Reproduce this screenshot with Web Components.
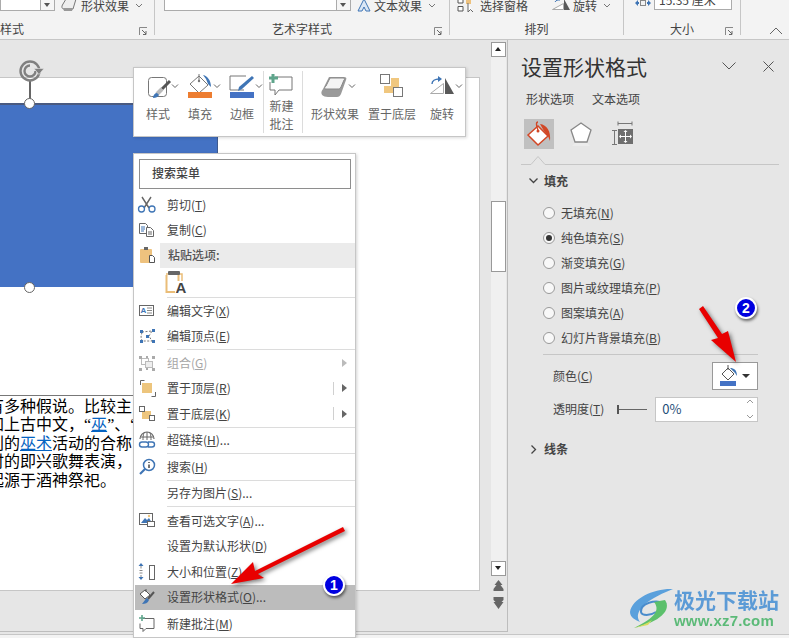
<!DOCTYPE html>
<html lang="zh-CN">

<head>
    <meta charset="UTF-8">
    <title>设置形状格式</title>
    <style>
        html, body { margin: 0; padding: 0; background: #e6e6e6; }
        body { width: 789px; height: 638px; overflow: hidden; font: 12px "Noto Sans CJK SC", "Noto Sans", sans-serif; color: #444; }
    </style>
</head>

<body>
    <ppt-window></ppt-window>
    <script>
        const chev = (x, y) => `<path d="M${x - 3} ${y - 1.5}l3 3 3-3" fill="none" stroke="#666"/>`;

        // viewBox values are screenshot coordinates, easier to compare with the reference
        const ICONS = {
            style: ['137 70 42 34', `<rect x="148.5" y="77.5" width="18" height="19" rx="3" fill="#fff" stroke="#777"/><path d="M170 81l-8 8" stroke="#555" stroke-width="3"/><path d="M162 89l-5 5" stroke="#bbb" stroke-width="4"/><path d="M153 98c0-3 2-5 4-5l2 2c-1 2-3 3-6 3z" fill="#3f75b5"/>${chev(175, 86)}`],
            fill: ['179 70 42 34', `<path d="M190 84l9-8 9 9-9 8z" fill="#fff" stroke="#777"/><path d="M199 74v7" stroke="#777"/><circle cx="199" cy="81" r="1.2" fill="#777"/><path d="M203 75c5 1 8 6 8 12l-3-3-2-5z" fill="#3f75b5"/><rect x="188" y="92" width="24" height="6" fill="#ed7d31"/>${chev(217, 86)}`],
            border: ['221 70 42 34', `<path d="M246 76h-16v14h14" fill="none" stroke="#777"/><path d="M252 76l2 2-12 11-4 2 1-4z" fill="#3f75b5"/><rect x="230" y="92" width="24" height="6" fill="#4472c4"/>${chev(259, 86)}`],
            note: ['264 70 38 28', `<path d="M275 77h17v13h-13l-4 5v-5h-5v-8" fill="#fff" stroke="#777"/><path d="M273 74v9M269 78h9" stroke="#5fa58c" stroke-width="3"/>`],
            effect: ['306 70 58 34', `<path d="M329 77h15c2 0 3 1 2 3l-5 14c-1 2-2 3-4 3h-9c-5 0-9-3-5-8z" fill="#9a9a9a"/><path d="M330 78h13c2 0 2 1 1 2l-3 7c-1 2-2 2-4 2h-12c-1-1 0-2 1-3z" fill="#f4f4f4" stroke="#888"/>${chev(352, 86)}`],
            back: ['364 70 56 34', `<rect x="391" y="78" width="8" height="9" fill="#f0c77f"/><rect x="384" y="86" width="9" height="7" fill="#f0c77f"/><rect x="380.5" y="74.5" width="9" height="9" fill="#fff" stroke="#777"/><rect x="393.5" y="87.5" width="9" height="9" fill="#fff" stroke="#777"/>`],
            rotate: ['420 70 44 34', `<path d="M430.5 93.5l13-10v10z" fill="#fff" stroke="#aaa"/><path d="M445 78l9 16h-9z" fill="#595959"/><path d="M432 84c0-3 3-5 7-5" fill="none" stroke="#3f75b5" stroke-width="1.4"/><path d="M438 76l4 3-4 3z" fill="#3f75b5"/>${chev(459, 86)}`],

            cut: ['137 195 20 20', `<path d="M142 197l7 11M151 197l-7 11" stroke="#666" stroke-width="1.4"/><circle cx="141.5" cy="209" r="3" fill="none" stroke="#3f75b5" stroke-width="1.3"/><circle cx="152" cy="209" r="3" fill="none" stroke="#3f75b5" stroke-width="1.3"/>`],
            copy: ['137 220 20 20', `<path d="M139.5 223.5h6l2 2v8h-8z" fill="#fff" stroke="#666"/><path d="M141 227h4M141 229h4M141 231h3" stroke="#3f75b5"/><path d="M146.5 227.5h4l3 3v6h-7z" fill="#fff" stroke="#666"/><path d="M148 232h4M148 234h4" stroke="#666"/>`],
            paste: ['137 245 20 20', `<rect x="140" y="248" width="12" height="14" rx="1" fill="#eec27e"/><rect x="144" y="246" width="4" height="3" fill="#666"/><path d="M149.5 254.5h3l2 2v5h-5z" fill="#fff" stroke="#555"/>`],
            pastetext: ['165 270 24 26', `<path d="M166.5 275v17h12V275" fill="none" stroke="#eabd78" stroke-width="2"/><path d="M166 274h16v9" fill="none" stroke="#eabd78" stroke-width="1.5"/><rect x="168" y="271" width="12" height="4" rx="1" fill="#666"/><rect x="175" y="281" width="12" height="13" fill="#fff"/><text x="175.5" y="293" font-size="15" font-weight="700" fill="#444" font-family="Liberation Sans">A</text>`],
            edittext: ['137 301 20 20', `<rect x="139.5" y="305.5" width="14" height="10" fill="#fff" stroke="#666"/><text x="140.5" y="313" font-size="8" font-weight="700" fill="#3f75b5" font-family="Liberation Sans">A</text><path d="M147 308h5M147 310.5h5M147 313h5" stroke="#888"/>`],
            points: ['137 326 20 20', `<path d="M142 332l10-1-3 5 3 5-10 0-1-4z" fill="none" stroke="#777" stroke-dasharray="2 1.5"/><path d="M140 330h3v3h-3zM152 329h3v3h-3zM146 335h3v3h-3zM140 340h3v3h-3zM152 340h3v3h-3z" fill="#3f75b5"/>`],
            group: ['137 353 20 20', `<rect x="141.5" y="358.5" width="7" height="6" fill="none" stroke="#bbb"/><rect x="145.5" y="361.5" width="7" height="6" fill="#eee" stroke="#bbb"/><path d="M139 356h3v3h-3zM152 356h3v3h-3zM139 368h3v3h-3zM152 368h3v3h-3zM146 356h2v2h-2zM146 368h2v2h-2z" fill="#aaa"/>`],
            front: ['137 378 20 20', `<path d="M140.5 385v-4.500h4M155.5 392v4.500h-4" fill="none" stroke="#666"/><rect x="142" y="383" width="10" height="10" fill="#edc57d"/>`],
            sendback: ['137 403 20 20', `<rect x="142" y="410" width="9" height="8" fill="#edc57d"/><rect x="139.5" y="405.5" width="5" height="5" fill="#fff" stroke="#666"/><rect x="149.5" y="414.5" width="5" height="5" fill="#fff" stroke="#666"/>`],
            link: ['137 430 20 20', `<path d="M140 439a7 7 0 0 1 14 0" fill="none" stroke="#666" stroke-width="1.2"/><path d="M147 432v8M140.5 437h13M144 433c-1 2-1 5-1 7M150 433c1 2 1 5 1 7" stroke="#666" fill="none"/><path d="M142 442h4a2 2 0 0 1 0 5h-4a2 2 0 0 1 0-5zM148 442h4a2 2 0 0 1 0 5h-4" fill="none" stroke="#3f75b5" stroke-width="1.4"/>`],
            search: ['137 457 20 20', `<circle cx="149" cy="465" r="5.5" fill="#fff" stroke="#3f75b5" stroke-width="1.5"/><path d="M145 469l-5 5" stroke="#3f75b5" stroke-width="2.2"/><path d="M149 462v1M149 464.500v3.500" stroke="#444" stroke-width="1.5"/>`],
            alt: ['137 511 20 20', `<rect x="139.5" y="513.5" width="13" height="11" fill="#fff" stroke="#666"/><path d="M141 523l4-5 2 2 2-2 3 5z" fill="#3f75b5"/><circle cx="149" cy="516" r="1.2" fill="#edc57d"/><rect x="147.5" y="521.5" width="7" height="5" fill="#fff" stroke="#666"/>`],
            size: ['137 561 20 20', `<path d="M141 564.500v3M141 574v3M139.500 569.500h3M139.500 572h3" stroke="#888"/><path d="M141 562l-2.500 3h5zM141 579l-2.500-3h5z" fill="#3f75b5"/><rect x="149.5" y="564.5" width="5" height="14" fill="#fff" stroke="#666"/>`],
            format: ['137 587 20 20', `<path d="M140 594l5-4 5 5-5 4z" fill="#fff" stroke="#555"/><path d="M146 589v3" stroke="#555"/><path d="M154 592l-6 7" stroke="#555" stroke-width="2"/><path d="M147 598c-2 1-3 4-5 6 3 0 6-1 7-4z" fill="#3f75b5"/>`],
            comment: ['137 613 20 20', `<path d="M143 617.500h11v10h-8l-3 3v-3h-3v-5" fill="#fff" stroke="#666"/><path d="M142 614v6M139 617h6" stroke="#5fa58c" stroke-width="1.6"/>`]
        };

        const svgIcon = (name) => {
            const [vb, body] = ICONS[name];
            const parts = vb.split(' ');
            return `<svg width="${parts[2]}" height="${parts[3]}" viewBox="${vb}" aria-hidden="true">${body}</svg>`;
        };

        const define = (name, css, html) => {
            customElements.define(name, class extends HTMLElement {
                connectedCallback() {
                    if (this.shadowRoot) return;
                    const root = this.attachShadow({ mode: 'open' });
                    const markup = typeof html === 'function' ? html(this) : html;
                    root.innerHTML = `<style>${css}</style>${markup}`;
                }
            });
        };

        define('ribbon-group', `
            :host { display: block; height: 35px; box-sizing: border-box; border-right: 1px solid #c6c6c6; flex: none; }
            .top { height: 22px; display: flex; align-items: flex-start; }
            .foot { height: 13px; display: grid; grid-template-columns: 1fr auto 1fr; align-items: center; line-height: 14px; }
            .foot span { grid-column: 2; }
            :host([start]) .foot span { grid-column: 1; justify-self: start; }
            svg { grid-column: 3; justify-self: end; margin: 4px 6px 0 0; }
        `, el => `<div class="top"><slot></slot></div>
            <div class="foot"><span>${el.getAttribute('label')}</span>
            ${el.hasAttribute('launch') ? '<svg width="9" height="9" viewBox="0 0 9 9"><path d="M.5 8V.5H8" fill="none" stroke="#888"/><path d="M3 3l4 4M7 4v3.5H4" fill="none" stroke="#666"/></svg>' : ''}</div>`);

        define('ribbon-combo', `
            :host { display: block; box-sizing: border-box; height: 11px; background: #fff; border: 1px solid #ababab; border-top: 0; position: relative; flex: none; }
            .drop { position: absolute; right: 0; top: 0; bottom: 0; width: 13px; border-left: 1px solid #ababab; background: #f6f6f6; }
            .drop::after { content: ""; position: absolute; left: 3px; top: 3px; border: 3.5px solid transparent; border-top: 4px solid #555; border-bottom: 0; }
        `, `<div class="drop"></div>`);

        define('ribbon-text', `
            :host { display: inline-flex; align-items: center; gap: 3px; height: 11px; line-height: 11px; flex: none; color: #444; white-space: nowrap; }
        `, el => `<slot name="icon"></slot><span><slot></slot></span>${el.hasAttribute('drop') ? '<svg width="8" height="6" viewBox="0 0 8 6" style="margin-left:3px"><path d="M1 1l3 3 3-3" fill="none" stroke="#777"/></svg>' : ''}`);

        define('app-ribbon', `
            :host { display: flex; height: 40px; box-sizing: border-box; background: #f3f3f3; border-bottom: 1px solid #c6c6c6; overflow: hidden; position: relative; }
            .collapse { margin: 27px 0 0 28px; }
            ribbon-group:nth-of-type(1) { width: 155px; }
            ribbon-group:nth-of-type(2) { width: 295px; }
            ribbon-group:nth-of-type(3) { width: 174px; }
            ribbon-group:nth-of-type(4) { width: 117px; }
        `, `
            <ribbon-group label="样式" start launch>
                <ribbon-combo style="width:55px"></ribbon-combo>
                <ribbon-text drop style="margin-left:6px">
                    <svg slot="icon" width="17" height="14" viewBox="0 0 17 14"><path d="M5 0h10l-3 10H3C1 10 0 8 2 5z" fill="#eee" stroke="#777"/><path d="M2 9h10l-1 3H3z" fill="#999"/></svg>形状效果
                </ribbon-text>
            </ribbon-group>
            <ribbon-group label="艺术字样式" launch>
                <ribbon-combo style="width:187px;margin-left:9px"></ribbon-combo>
                <ribbon-text drop style="margin-left:6px">
                    <svg slot="icon" width="14" height="14" viewBox="0 0 14 14"><path d="M7 0l-6 12h4l2-4 2 4h4z" fill="#dbe7f5" stroke="#3f75b5"/></svg>文本效果
                </ribbon-text>
            </ribbon-group>
            <ribbon-group label="排列">
                <ribbon-text style="margin-left:7px">
                    <svg slot="icon" width="20" height="14" viewBox="0 0 20 14"><path d="M1 0v4h5V0zM1 7.500h5V12H1z" fill="#fff" stroke="#555"/><path d="M9 0h5v5H9z" fill="#eec27e"/><path d="M11 4v9l2.500-2.500L16 13" fill="#fff" stroke="#666"/></svg>选择窗格
                </ribbon-text>
                <ribbon-text drop style="margin-left:24px">
                    <svg slot="icon" width="18" height="14" viewBox="0 0 18 14"><path d="M.5 10.500l11-6v6z" fill="#fff" stroke="#aaa"/><path d="M12 0l6 11h-6z" fill="#595959"/><path d="M3 3c1-2 3-2 5-2" fill="none" stroke="#3f75b5"/></svg>旋转
                </ribbon-text>
            </ribbon-group>
            <ribbon-group label="大小" launch>
                <svg width="18" height="10" viewBox="0 0 18 10" style="margin:0 0 0 10px;flex:none"><path d="M1 3l3-3v2h1v2H4v2zM17 3l-3-3v2h-1v2h1v2z" fill="#3f75b5"/><rect x="6.5" y="0.5" width="5" height="5" fill="none" stroke="#888"/></svg>
                <div style="margin-left:2px;width:78px;height:10px;box-sizing:border-box;background:#fff;border:1px solid #ababab;border-top:0;overflow:hidden;line-height:10px;padding-left:4px;white-space:nowrap;position:relative"><span style="position:relative;top:-5px">15.35 厘米</span></div>
            </ribbon-group>
            <svg class="collapse" width="14" height="8" viewBox="0 0 14 8"><path d="M1 7l6-6 6 6" fill="none" stroke="#666"/></svg>
        `);

        define('tool-button', `
            :host { display: flex; flex-direction: column; align-items: center; flex: none; height: 68px; color: #666; line-height: 18px; text-align: center; }
            svg { display: block; flex: none; margin-top: 2px; }
            .t { margin-top: 1px; white-space: nowrap; }
            :host([two]) .t { margin: -1px 3px 0 0; }
        `, el => `${svgIcon(el.getAttribute('icon'))}<div class="t"><slot></slot></div>`);

        define('mini-toolbar', `
            :host { position: absolute; left: 133px; top: 67px; width: 333px; height: 70px; box-sizing: border-box; display: flex; background: #fff; border: 1px solid #c6c6c6; box-shadow: 1px 1px 3px rgba(0, 0, 0, .15); padding-left: 3px; }
            i { flex: none; width: 1px; margin: 3px 0; background: #dcdcdc; }
        `, `
            <tool-button icon="style">样式</tool-button>
            <tool-button icon="fill">填充</tool-button>
            <tool-button icon="border">边框</tool-button>
            <i></i>
            <tool-button icon="note" two>新建<br>批注</tool-button>
            <i style="margin-right:3px"></i>
            <tool-button icon="effect">形状效果</tool-button>
            <tool-button icon="back">置于底层</tool-button>
            <tool-button icon="rotate">旋转</tool-button>
        `);

        define('menu-sep', `:host { display: block; height: 1px; background: #dcdcdc; margin-left: 33px; }`, '');

        define('menu-item', `
            :host { display: flex; align-items: center; height: 25.5px; position: relative; color: #444; line-height: 18px; white-space: nowrap; }
            .ic { width: 26px; flex: none; display: flex; justify-content: center; }
            .t { margin-left: 7px; flex: 1; }
            :host([disabled]) { color: #a6a6a6; }
            :host([active]) { background: #bcbcbc; margin-left: 1px; }
            :host([active]) .ic { margin-left: -1px; }
            .sep { width: 1px; height: 13px; background: #d0d0d0; margin-right: 8px; }
            .arr { width: 0; height: 0; border: 4px solid transparent; border-left: 5px solid #666; border-right: 0; margin-right: 8px; }
            :host([disabled]) .arr { border-left-color: #bbb; }
        `, el => {
            const name = el.getAttribute('icon');
            const arrow = el.getAttribute('arrow');
            return `<div class="ic">${name ? svgIcon(name) : ''}</div><div class="t"><slot></slot></div>
                ${arrow === 'split' ? '<div class="sep"></div>' : ''}${arrow ? '<div class="arr"></div>' : ''}`;
        });

        define('context-menu', `
            :host { position: absolute; left: 133px; top: 153px; width: 223px; height: 485px; box-sizing: border-box; background: #fff; border: 1px solid #c6c6c6; box-shadow: 1px 1px 3px rgba(0, 0, 0, .18); }
            .search { box-sizing: border-box; height: 30px; margin: 5px 4px 3px 5px; border: 1px solid #8e8e8e; padding-left: 12px; line-height: 26px; color: #444; font-weight: 500; }
            .paste-head { display: flex; height: 25px; align-items: center; }
            .paste-head .ic { width: 26px; flex: none; display: flex; justify-content: center; }
            .paste-head b { flex: 1; height: 100%; background: #ebebeb; font-weight: 500; line-height: 24px; padding-left: 8px; color: #555; }
            .paste-body { height: 27px; padding-left: 31px; }
            .paste-body svg { display: block; margin-top: 2px; }
        `, `
            <div class="search">搜索菜单</div>
            <menu-item icon="cut">剪切(<u>T</u>)</menu-item>
            <menu-item icon="copy">复制(<u>C</u>)</menu-item>
            <div class="paste-head"><div class="ic">${svgIcon('paste')}</div><b>粘贴选项:</b></div>
            <div class="paste-body">${svgIcon('pastetext')}</div>
            <menu-sep></menu-sep>
            <menu-item icon="edittext">编辑文字(<u>X</u>)</menu-item>
            <menu-item icon="points">编辑顶点(<u>E</u>)</menu-item>
            <menu-sep></menu-sep>
            <menu-item icon="group" disabled arrow="plain">组合(<u>G</u>)</menu-item>
            <menu-item icon="front" arrow="split">置于顶层(<u>R</u>)</menu-item>
            <menu-item icon="sendback" arrow="split">置于底层(<u>K</u>)</menu-item>
            <menu-sep></menu-sep>
            <menu-item icon="link">超链接(<u>H</u>)...</menu-item>
            <menu-sep></menu-sep>
            <menu-item icon="search">搜索(<u>H</u>)</menu-item>
            <menu-sep></menu-sep>
            <menu-item>另存为图片(<u>S</u>)...</menu-item>
            <menu-sep style="margin-bottom:1px"></menu-sep>
            <menu-item icon="alt">查看可选文字(<u>A</u>)...</menu-item>
            <menu-item>设置为默认形状(<u>D</u>)</menu-item>
            <menu-item icon="size">大小和位置(<u>Z</u>)...</menu-item>
            <menu-item icon="format" active>设置形状格式(<u>O</u>)...</menu-item>
            <menu-item icon="comment" style="height:27px">新建批注(<u>M</u>)</menu-item>
        `);

        define('slide-page', `
            :host { display: block; position: relative; height: 514px; box-sizing: border-box; background: #fff; border: 1px solid #c6c6c6; border-left: 0; overflow: hidden; }
            .textbox { position: absolute; left: 0; width: 134px; top: 317px; height: 110px; border-top: 1px solid #777; overflow: hidden; font: 16px/18.4px "Liberation Serif", "Noto Sans CJK SC", serif; color: #000; }
            .textbox div { margin-left: -6px; white-space: nowrap; }
            a { color: #0563c1; text-decoration: underline; }
            .lines { padding-top: 2px; }
        `, `<div class="textbox"><div class="lines">
            <div>有多种假说。比较主</div>
            <div>加上古中文，“<a>巫</a>”、“</div>
            <div>别的<a>巫术</a>活动的合称</div>
            <div>时的即兴歌舞表演，</div>
            <div>起源于酒神祭祀。</div>
        </div></div>`);

        define('selected-shape', `
            :host { position: absolute; left: 0; top: 63px; width: 218px; height: 184px; box-sizing: border-box; background: #4472c4; border-top: 2px solid #4a5a80; border-right: 1px solid #3f5a8e; }
            .stem { position: absolute; left: 29px; top: -25px; width: 1.5px; height: 22px; background: #666; }
            .h { position: absolute; left: 24px; width: 11px; height: 11px; box-sizing: border-box; border-radius: 50%; background: #fff; border: 1.5px solid #666; }
            .rot { position: absolute; left: 18px; top: -46px; }
        `, `<div class="stem"></div>
            <svg class="rot" width="28" height="26" viewBox="0 0 28 26"><circle cx="12" cy="12" r="9.5" fill="none" stroke="#808080" stroke-width="2.4"/><path d="M12 6.500a5.500 5.500 0 1 0 5.500 5.500" fill="none" stroke="#808080" stroke-width="2.4"/><path d="M16 9.500l10 0-5 6z" fill="#808080" stroke="#e6e6e6" stroke-width=".6"/></svg>
            <div class="h" style="top:-7px"></div><div class="h" style="bottom:-6px"></div>`);

        define('doc-canvas', `
            :host { display: block; position: relative; width: 491px; flex: none; padding: 37px 11px 0 0; box-sizing: border-box; overflow: visible; }
        `, `<slide-page></slide-page><selected-shape></selected-shape>`);

        define('v-scroll', `
            :host { display: flex; flex-direction: column; width: 17px; flex: none; box-sizing: border-box; padding: 2px 1px 0 0; border-right: 1px solid #bdbdbd; }
            .btn { box-sizing: border-box; width: 15px; height: 15px; background: #fff; border: 1px solid #999; flex: none; position: relative; }
            .btn::after { content: ""; position: absolute; left: 3px; top: 4px; border: 3.5px solid transparent; border-top: 0; border-bottom: 4px solid #222; }
            .btn.dn::after { border-bottom: 0; border-top: 4px solid #222; }
            .track { width: 15px; height: 504px; background: #f0f0f0; flex: none; padding-top: 144px; box-sizing: border-box; }
            .thumb { box-sizing: border-box; width: 15px; height: 71px; background: #fff; border: 1px solid #999; }
            svg { display: block; margin-top: 3px; }
        `, `<div class="btn"></div><div class="track"><div class="thumb"></div></div><div class="btn dn"></div>
            <svg width="15" height="32" viewBox="0 0 15 32"><path d="M7.5 1l4 5h-2l3 4v2h-10v-2l3-4h-2zM2.5 18h10v3l-2 2h2l-5 7-5-7h2l-2-2z" fill="#666"/></svg>`);

        define('radio-row', `
            :host { display: flex; align-items: center; height: 25px; padding-left: 22px; line-height: 18px; color: #444; }
            .r { box-sizing: border-box; width: 12px; height: 12px; border-radius: 50%; border: 1px solid #999; background: #f8f8f8; margin-right: 6px; display: flex; align-items: center; justify-content: center; flex: none; }
            :host([on]) .r::after { content: ""; width: 6px; height: 6px; border-radius: 50%; background: #333; }
        `, `<div class="r"></div><slot></slot>`);

        define('format-pane', `
            :host { display: block; width: 281px; flex: none; box-sizing: border-box; padding-left: 13px; color: #444; position: relative; line-height: 18px; }
            .head { display: flex; align-items: center; height: 28px; margin-top: 12px; }
            h1 { margin: 0; font-size: 21px; font-weight: 400; color: #333; line-height: 28px; flex: 1; }
            .head svg { flex: none; }
            .tabs { display: flex; gap: 18px; margin: 9px 0 0 5px; height: 20px; align-items: center; }
            .icons { display: flex; height: 30px; margin: 10px 0 0 3px; }
            .icons div { width: 30px; height: 30px; display: flex; align-items: center; justify-content: center; flex: none; }
            .icons .on { background: #c0c0c0; }
            .notch { display: block; margin-top: 7px; }
            .sec { display: flex; align-items: center; height: 20px; font-weight: 700; gap: 6px; padding-left: 8px; }
            .sec.open { margin: 6px 0 9px; }
            .sec svg { flex: none; }
            .rule { height: 1px; background: #c6c6c6; margin: 4px 0 7px 22px; width: 215px; }
            .row { display: flex; align-items: center; height: 28px; padding-left: 32px; }
            .cbtn { box-sizing: border-box; margin-left: auto; margin-right: 31px; width: 46px; height: 28px; background: #fff; border: 1px solid #999; display: flex; align-items: center; justify-content: center; gap: 4px; }
            .tri { border: 4px solid transparent; border-top: 4px solid #333; border-bottom: 0; width: 0; height: 0; }
            .row2 { display: flex; align-items: center; height: 26px; margin-top: 6px; padding-left: 32px; }
            .slider { width: 30px; height: 1px; background: #666; margin-left: 13px; flex: none; position: relative; }
            .slider::before { content: ""; position: absolute; left: 0; top: -4px; width: 2px; height: 9px; background: #555; }
            .num { box-sizing: border-box; width: 103px; height: 25px; margin-left: 8px; background: #fff; border: 1px solid #c6c6c6; padding-left: 6px; display: flex; align-items: center; justify-content: space-between; color: #1f4e79; font-size: 13px; flex: none; }
            .num svg { margin-right: 3px; }
            .sec.closed { margin-top: 17px; }
        `, `
            <div class="head"><h1>设置形状格式</h1>
                <svg width="14" height="8" viewBox="0 0 14 8" style="margin-right:27px"><path d="M.5.5L7 7l6.5-6.5" fill="none" stroke="#555"/></svg>
                <svg width="11" height="11" viewBox="0 0 11 11" style="margin-right:15px"><path d="M.5.5l10 10M10.5.5l-10 10" stroke="#555"/></svg>
            </div>
            <div class="tabs"><span>形状选项</span><span>文本选项</span></div>
            <div class="icons">
                <div class="on"><svg width="26" height="26" viewBox="0 0 26 26"><path d="M2 14l10-9 10 10-10 9z" fill="#fff" stroke="#d24726" stroke-width="1.5"/><path d="M12 1c-2 0-2 3 0 8" fill="none" stroke="#d24726" stroke-width="1.4"/><circle cx="12" cy="10" r="1.5" fill="#d24726"/><path d="M14 3c7 1 11 7 10 17l-2-5-4-5z" fill="#d24726"/></svg></div>
                <div style="margin-left:12px"><svg width="24" height="26" viewBox="0 0 24 26"><path d="M12 2l10 7-4 12H6L2 9z" fill="#fff" stroke="#888" stroke-width="1.3"/><path d="M6 22c-1 1-2 2-3 3h18c-1-1-2-2-3-3z" fill="#ececec"/></svg></div>
                <div style="margin-left:12px"><svg width="24" height="30" viewBox="0 -2 24 30"><path d="M7 2.500h14M7 .5v4M21 .5v4M1 9.500h5M1 23.500h5M3.500 10v13" fill="none" stroke="#777"/><rect x="7" y="8" width="15" height="15" fill="#6e6e6e"/><path d="M14.500 10v11M9 15.500h11" stroke="#fff"/><path d="M14.500 9l-2 2h4zM14.500 22l-2-2h4zM8 15.500l2-2v4zM21 15.500l-2-2v4z" fill="#fff"/></svg></div>
            </div>
            <svg class="notch" width="258" height="9" viewBox="0 0 258 9"><path d="M0 8.500h10l7-8 7 8h234" fill="none" stroke="#c6c6c6"/></svg>
            <div class="sec open"><svg width="9" height="6" viewBox="0 0 9 6"><path d="M.5.5l4 4 4-4" fill="none" stroke="#444" stroke-width="1.3"/></svg>填充</div>
            <radio-row>无填充(<u>N</u>)</radio-row>
            <radio-row on>纯色填充(<u>S</u>)</radio-row>
            <radio-row>渐变填充(<u>G</u>)</radio-row>
            <radio-row>图片或纹理填充(<u>P</u>)</radio-row>
            <radio-row>图案填充(<u>A</u>)</radio-row>
            <radio-row>幻灯片背景填充(<u>B</u>)</radio-row>
            <div class="rule"></div>
            <div class="row"><span>颜色(<u>C</u>)</span>
                <div class="cbtn"><svg width="18" height="22" viewBox="0 0 18 22"><path d="M2 9l6-6 6 6-6 6z" fill="#fff" stroke="#555"/><path d="M8 0v5" stroke="#555"/><path d="M10 3c4 0 7 2 7 8l-2-3-2-2z" fill="#3f75b5"/><rect x="0" y="16" width="16" height="5" fill="#4472c4"/></svg><div class="tri"></div></div>
            </div>
            <div class="row2"><span>透明度(<u>T</u>)</span><div class="slider"></div>
                <div class="num">0%<svg width="8" height="20" viewBox="0 0 8 20"><path d="M1 4l3-3 3 3M1 16l3 3 3-3" fill="none" stroke="#999"/></svg></div>
            </div>
            <div class="sec closed"><svg width="6" height="9" viewBox="0 0 6 9" style="margin-left:2px;margin-right:1px"><path d="M.5.5l4 4-4 4" fill="none" stroke="#444" stroke-width="1.3"/></svg>线条</div>
        `);

        define('step-badge', `
            :host { position: absolute; width: 22px; height: 22px; box-sizing: border-box; border-radius: 50%; background: #0000e0; border: 2px solid #fff; box-shadow: 1px 2px 3px rgba(0, 0, 0, .55); color: #fff; font: 700 14px/18px "Liberation Sans", sans-serif; text-align: center; }
        `, `<slot></slot>`);

        define('red-arrows', `
            :host { position: absolute; left: 0; top: 0; width: 789px; height: 638px; pointer-events: none; }
            svg { display: block; }
            polygon { fill: #e80000; filter: drop-shadow(2px 2px 2px rgba(0, 0, 0, .5)); }
        `, `<svg width="789" height="638" viewBox="0 0 789 638">
                <polygon points="231,584 253,562 255,571 343,527 345,531 258,574 264,578"/>
                <polygon points="699,309 703,306 722,334 728,331 736,362 711,340 718,338"/>
            </svg>`);

        define('brand-mark', `
            :host { position: absolute; left: 630px; top: 586px; width: 152px; height: 44px; display: flex; filter: blur(.4px); }
            svg { flex: none; }
            .txt { margin-left: 1px; display: flex; flex-direction: column; }
            .cn { font: 700 21px/26px "Noto Sans CJK SC", sans-serif; color: #5c9bd6; white-space: nowrap; }
            .en { font: 700 15px/17px "Liberation Sans", sans-serif; color: #5cba78; white-space: nowrap; letter-spacing: .2px; }
        `, `<svg width="43" height="44" viewBox="630 586 43 44">
                <path d="M673 589C655 588 632 598 630 612c0 6 6 8 10 10-6-8 0-20 33-33z" fill="#5aa0dc"/>
                <path d="M666 604c-11-6-26 0-25 8 1 4 9 4 15 0" fill="none" stroke="#4a8ccc" stroke-width="2"/>
                <path d="M665 600c7 10-5 22-31 28 16-8 28-16 20-26z" fill="#5cc06c"/>
                <path d="M634 628c6-2 12-4 18-8l-4 5z" fill="#d8dc60"/>
            </svg>
            <div class="txt"><div class="cn">极光下载站</div><div class="en">www.xz7.com</div></div>`);

        define('ppt-window', `
            :host { display: block; position: relative; width: 789px; height: 638px; overflow: hidden; background: #e6e6e6; }
            .main { display: flex; height: 594px; }
            .left { display: flex; width: 508px; height: 592px; flex: none; box-sizing: border-box; border-bottom: 1px solid #bdbdbd; }
            .status { height: 4px; box-sizing: border-box; background: #f3f3f3; border-top: 1px solid #c6c6c6; }
        `, `
            <app-ribbon></app-ribbon>
            <div class="main">
                <div class="left"><doc-canvas></doc-canvas><v-scroll></v-scroll></div>
                <format-pane></format-pane>
            </div>
            <div class="status"></div>
            <mini-toolbar></mini-toolbar>
            <context-menu></context-menu>
            <brand-mark></brand-mark>
            <red-arrows></red-arrows>
            <step-badge style="left:323px;top:574px">1</step-badge>
            <step-badge style="left:735px;top:297px">2</step-badge>
        `);
    </script>
</body>

</html>
